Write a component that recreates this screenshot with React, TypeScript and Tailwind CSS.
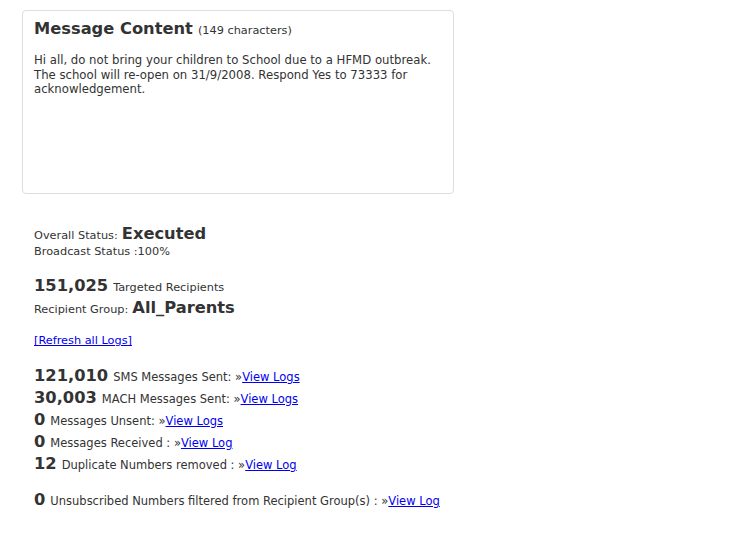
const Row = ({ n, label, link }: { n: string; label: string; link: string }) => (
  <div className="h-[22px] flex items-baseline text-[11.5px]">
    <span className="text-[16.3px] leading-[22px] font-bold mr-[5px]">{n}</span>
    <span>{label} »</span>
    <a href="#" className="text-[#0000ee] underline">{link}</a>
  </div>
);

const App = () => {
  return (
    <div className="w-[733px] h-[543px] bg-white text-[#333] text-[11.3px] font-['DejaVu_Sans',sans-serif] pt-[10px] pl-[22px]">
      <div className="w-[432px] h-[184px] border border-[#ddd] rounded-[4px] px-[11px] pt-[6px]">
        <div className="flex items-baseline h-[24px]">
          <span className="text-[16.3px] leading-[24px] font-bold mr-[5px]">Message Content</span>
          <span>(149 characters)</span>
        </div>
        <p className="mt-[12px] text-[11.7px] leading-[14.5px]">
          Hi all, do not bring your children to School due to a HFMD outbreak. The school will re-open on 31/9/2008. Respond Yes to 73333 for acknowledgement.
        </p>
      </div>

      <div className="pl-[12px] pt-[30px]">
        <div className="flex items-baseline h-[20px]">
          <span className="mr-[4px]">Overall Status:</span>
          <span className="text-[16.3px] leading-[20px] font-bold">Executed</span>
        </div>
        <div className="h-[15px] leading-[15px]">Broadcast Status :100%</div>

        <div className="flex items-baseline h-[22px] mt-[16px]">
          <span className="text-[16.3px] leading-[22px] font-bold mr-[5px]">151,025</span>
          <span>Targeted Recipients</span>
        </div>
        <div className="flex items-baseline h-[22px]">
          <span className="mr-[4px]">Recipient Group:</span>
          <span className="text-[16.3px] leading-[22px] font-bold">All_Parents</span>
        </div>

        <div className="mt-[14px] leading-[15px]">
          <a href="#" className="text-[#0000ee] underline">[Refresh all Logs]</a>
        </div>

        <div className="mt-[17px]">
          <Row n="121,010" label="SMS Messages Sent:" link="View Logs" />
          <Row n="30,003" label="MACH Messages Sent:" link="View Logs" />
          <Row n="0" label="Messages Unsent:" link="View Logs" />
          <Row n="0" label="Messages Received :" link="View Log" />
          <Row n="12" label="Duplicate Numbers removed :" link="View Log" />
        </div>

        <div className="mt-[14px]">
          <Row n="0" label="Unsubscribed Numbers filtered from Recipient Group(s) :" link="View Log" />
        </div>
      </div>
    </div>
  );
};

export default App;
